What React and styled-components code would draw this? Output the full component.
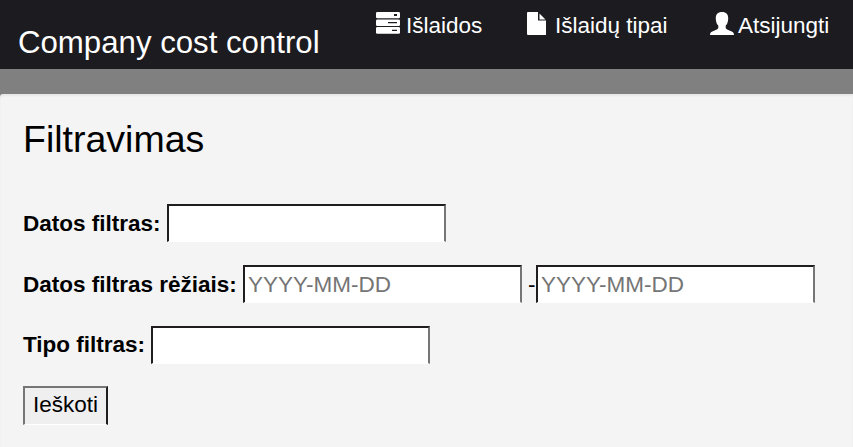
import React from "react";
import styled, { createGlobalStyle } from "styled-components";

const Global = createGlobalStyle`
  * { box-sizing: border-box; }
  html, body { margin: 0; height: 100%; overflow: hidden; background: #808080; }
  body { font: 22.5px/32px "Liberation Sans", Arial, sans-serif; color: #000; }
`;
const Page = styled.div`
  display: flex;
  flex-direction: column;
  height: 100vh;
`;
const Header = styled.header`
  display: flex;
  flex: none;
  height: 69px;
  margin-bottom: 25px;
  background: #1c1b20;
  color: #fff;
  white-space: nowrap;
`;
const Brand = styled.h1`
  margin: 0;
  padding: 25px 0 0 18px;
  width: 376px;
  font-size: 31.2px;
  font-weight: 400;
  line-height: 36px;
`;
const Nav = styled.nav`
  display: flex;
  padding-top: 10px;
`;
const NavItem = styled.a`
  display: flex;
  width: ${(p) => p.$width}px;
  color: #fff;
  svg { flex: none; width: 24px; height: 26px; margin-right: ${(p) => p.$gap}px; }
`;
const Panel = styled.main`
  flex: 1;
  padding: 24px 23px 0;
  background: #f4f4f4;
  border-radius: 3px 0 0 0;
  box-shadow: inset 0 2px 2px rgba(0, 0, 0, 0.05);
`;
const Heading = styled.h2`
  margin: 0 0 44px;
  font-size: 37.5px;
  font-weight: 400;
  line-height: 42px;
`;
const Row = styled.div`
  display: flex;
  height: 38px;
  margin-bottom: ${(p) => p.$gap || 23}px;
  line-height: ${(p) => p.$line || 40}px;
  white-space: pre;
`;
const Label = styled.label`
  width: ${(p) => p.$width}px;
  font-weight: 700;
`;
const Input = styled.input`
  width: 279px;
  height: 38px;
  padding: 1px 3px 0;
  border: 2px solid #1f1d1e;
  border-right-color: #757575;
  border-bottom: 1px solid #fff;
  border-radius: 0;
  outline: 0;
  background: #fff;
  font: inherit;
  &::placeholder { color: #757575; opacity: 1; }
`;
const Dash = styled.span`
  width: 14px;
  padding-left: 6px;
`;
const Button = styled.button`
  width: 85px;
  height: 39px;
  padding: 0 0 2px;
  border: 2px solid #757575;
  border-right-color: #1f1d1e;
  border-bottom: 1px solid #fff;
  border-radius: 0;
  background: #efefef;
  color: #000;
  font: inherit;
`;

const ServerIcon = () => (
  <svg viewBox="0 0 24 26" fill="#fff">
    <rect y="2" width="24" height="6.300" rx="1.300" />
    <rect y="9.500" width="24" height="6.500" rx="1.300" />
    <rect y="17" width="24" height="6.700" rx="1.300" />
    <path d="M18 4h3v2h-3zM12 12h9v1.300h-9zM16 19.700h5V21h-5z" fill="#1c1b20" />
  </svg>
);
const FileIcon = () => (
  <svg viewBox="0 0 24 26" fill="#fff">
    <path d="M1 2h10v8.500h8V25H1a1 1 0 0 1-1-1V3a1 1 0 0 1 1-1zM12.500 3.500 18.500 9.500h-6z" />
  </svg>
);
const UserIcon = () => (
  <svg viewBox="0 0 24 26" fill="#fff">
    <path d="M12 2c4.200 0 6.500 2.600 6.200 7-.2 3-1 5.200-2.500 6.600v2c0 1 .7 1.600 2 2.100l4 1.700c1.500.6 2.300 1.600 2.300 3.600H0c0-2 .8-3 2.300-3.600l4-1.700c1.300-.5 2-1.100 2-2.100v-2C6.800 14.200 6 12 5.800 9 5.500 4.600 7.800 2 12 2z" />
  </svg>
);

export default function App() {
  return (
    <Page>
      <Global />
      <Header>
        <Brand>Company cost control</Brand>
        <Nav>
          <NavItem $width={151} $gap={6}><ServerIcon />Išlaidos</NavItem>
          <NavItem $width={183} $gap={4}><FileIcon />Išlaidų tipai</NavItem>
          <NavItem $width={130} $gap={4}><UserIcon />Atsijungti</NavItem>
        </Nav>
      </Header>
      <Panel>
        <Heading>Filtravimas</Heading>
        <Row>
          <Label htmlFor="date" $width={144}>Datos filtras:</Label>
          <Input id="date" />
        </Row>
        <Row>
          <Label htmlFor="from" $width={220}>Datos filtras rėžiais:</Label>
          <Input id="from" placeholder="YYYY-MM-DD" />
          <Dash>-</Dash>
          <Input placeholder="YYYY-MM-DD" />
        </Row>
        <Row $gap={22} $line={38}>
          <Label htmlFor="type" $width={128}>Tipo filtras:</Label>
          <Input id="type" />
        </Row>
        <Button>Ieškoti</Button>
      </Panel>
    </Page>
  );
}
